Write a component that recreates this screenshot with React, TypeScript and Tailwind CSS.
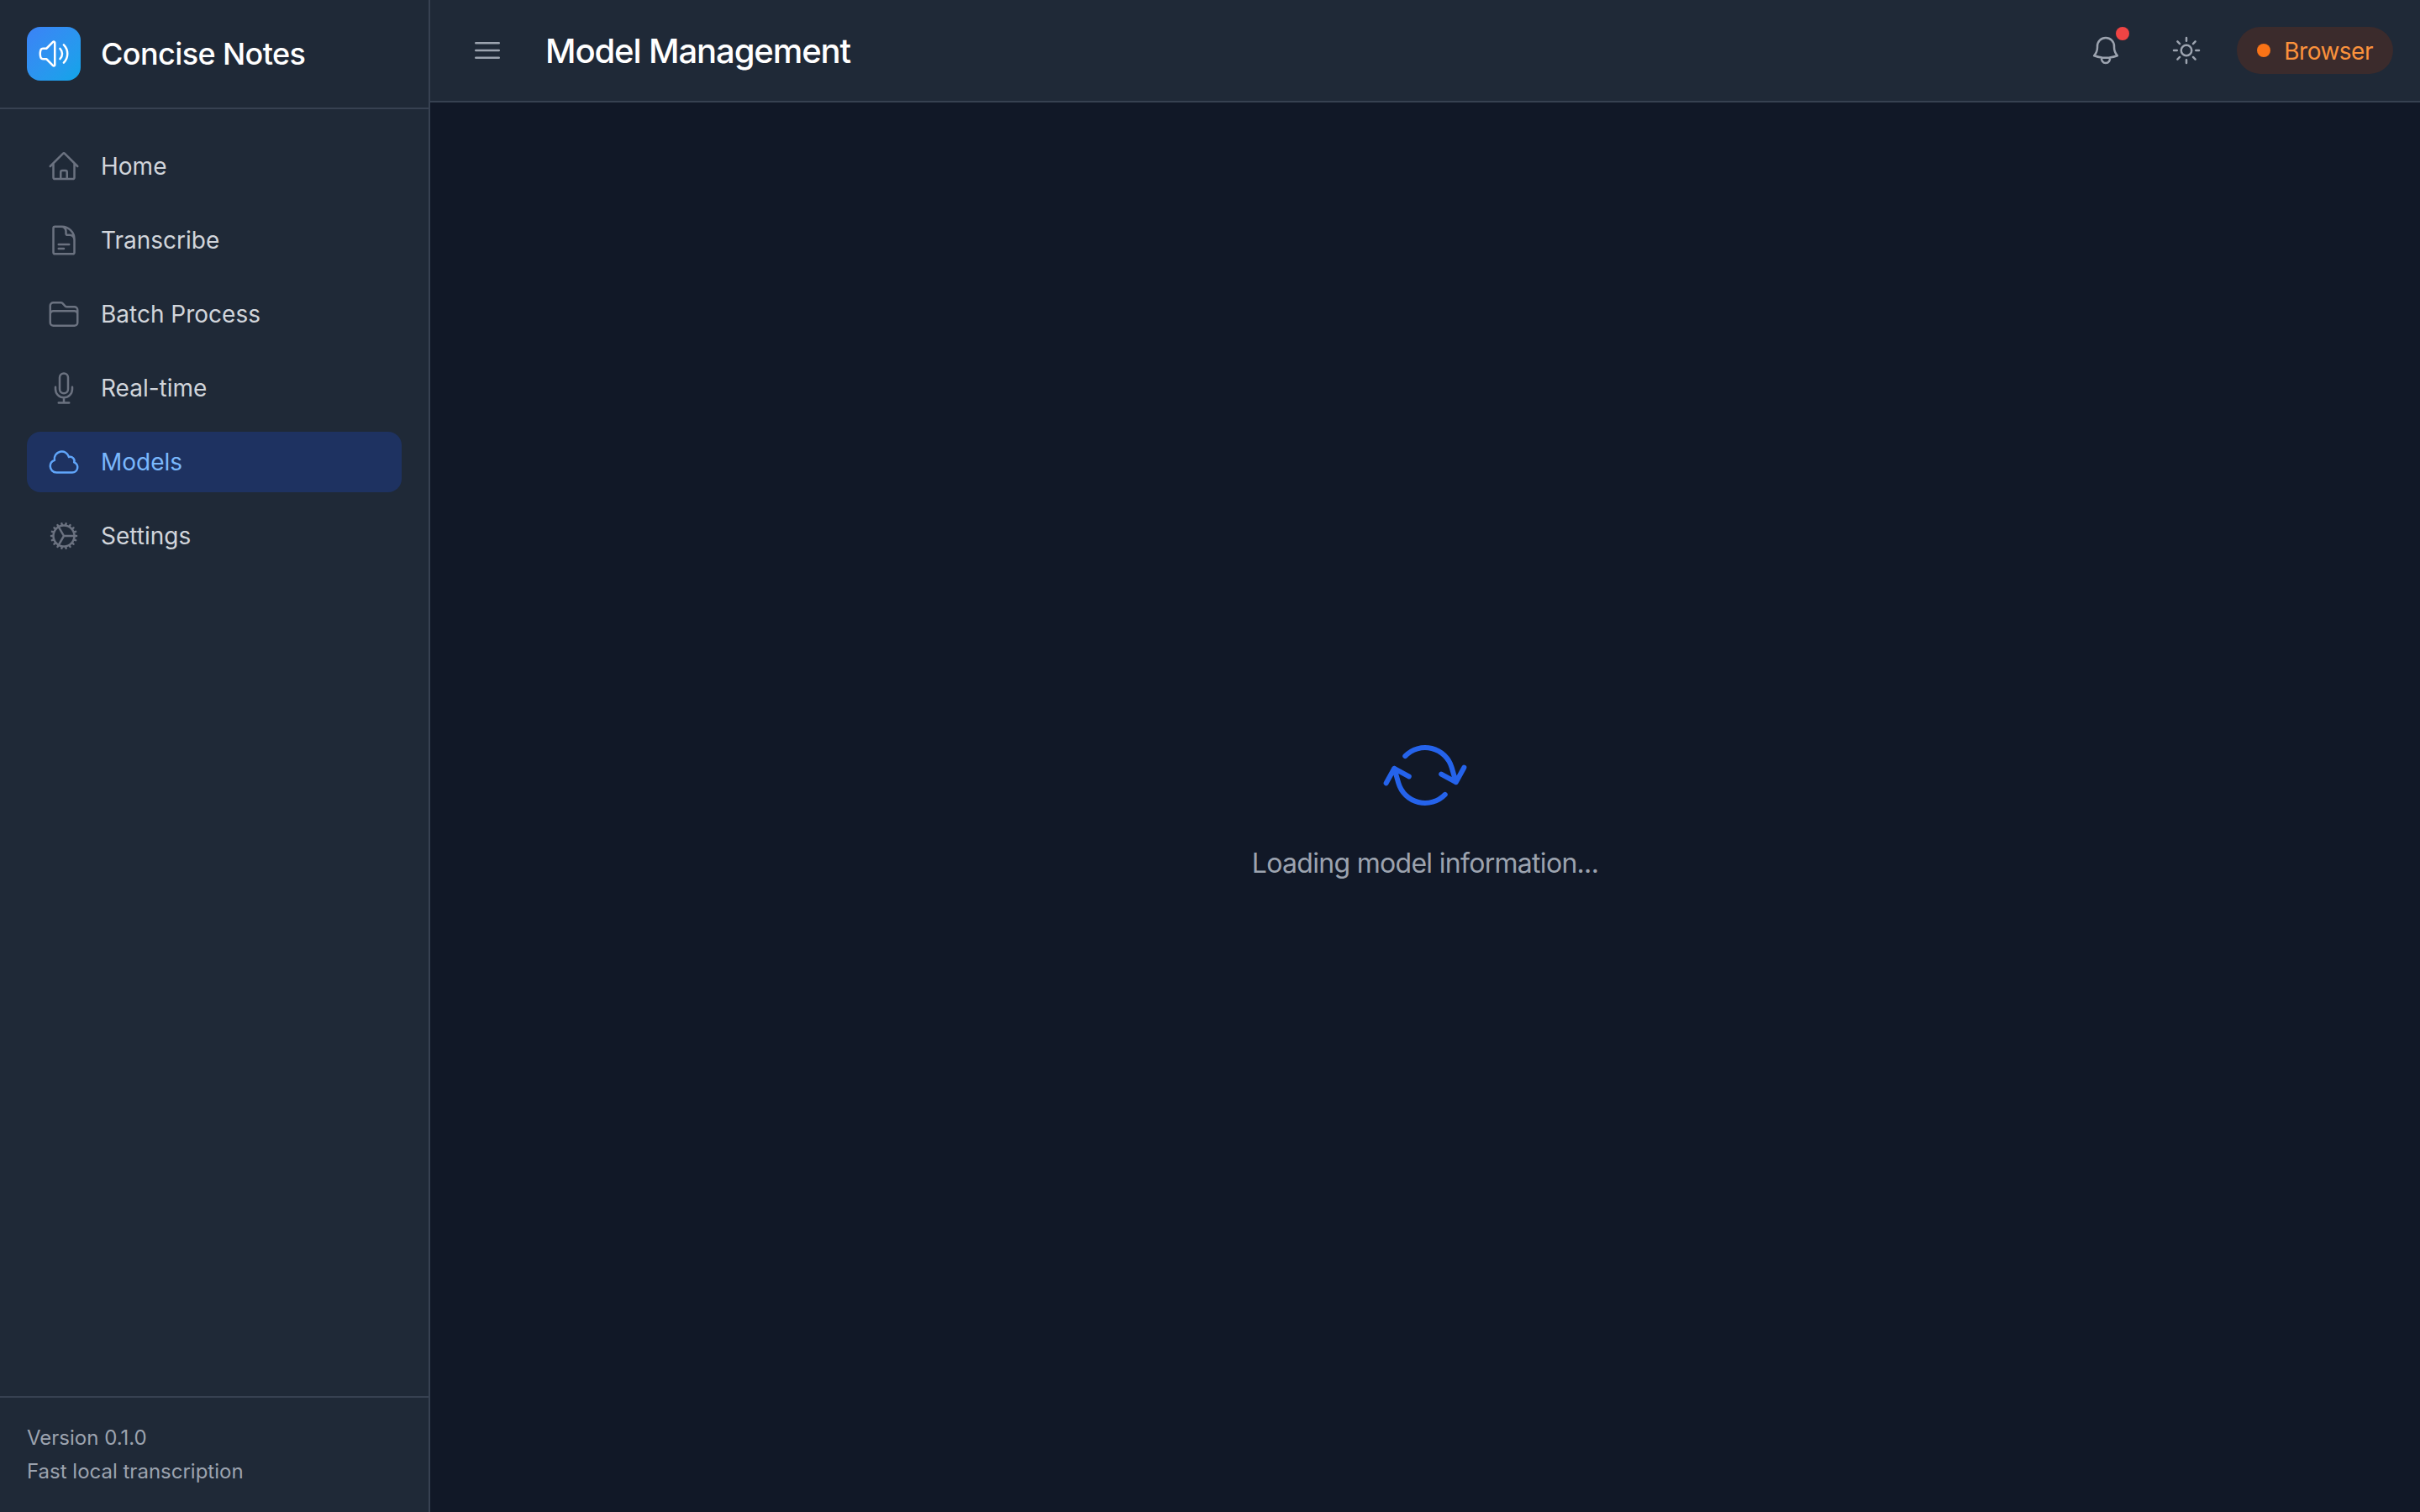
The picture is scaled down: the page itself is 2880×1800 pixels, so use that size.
import React from "react";
import {
  HiOutlineHome,
  HiOutlineDocumentText,
  HiOutlineFolder,
  HiOutlineMicrophone,
  HiOutlineCloud,
  HiOutlineCog,
  HiOutlineSpeakerWave,
  HiOutlineBars3,
  HiOutlineBell,
  HiOutlineSun,
  HiOutlineArrowPath,
} from "react-icons/hi2";

const items = [
  { label: "Home", Icon: HiOutlineHome },
  { label: "Transcribe", Icon: HiOutlineDocumentText },
  { label: "Batch Process", Icon: HiOutlineFolder },
  { label: "Real-time", Icon: HiOutlineMicrophone },
  { label: "Models", Icon: HiOutlineCloud, active: true },
  { label: "Settings", Icon: HiOutlineCog },
];

export default function App() {
  return (
    <div className="flex h-[1800px] w-[2880px] overflow-hidden bg-[#111827] font-['Inter',sans-serif]">
      <aside className="flex w-[512px] shrink-0 flex-col border-r-2 border-[#374151] bg-[#1f2937]">
        <div className="flex h-[130px] shrink-0 items-center gap-[24px] border-b-2 border-[#374151] px-[32px]">
          <div className="flex h-[64px] w-[64px] items-center justify-center rounded-[16px] bg-gradient-to-br from-[#3b82f6] to-[#0ea5e9] text-white">
            <HiOutlineSpeakerWave className="h-[40px] w-[40px]" />
          </div>
          <span className="text-[36px] leading-[56px] font-[550] tracking-[-0.6px] text-white">Concise Notes</span>
        </div>
        <nav className="flex flex-1 flex-col gap-[16px] p-[32px]">
          {items.map(({ label, Icon, active }) => (
            <div
              key={label}
              className={
                active
                  ? "flex h-[72px] items-center gap-[24px] rounded-[16px] bg-[#1e3261] px-[24px] text-[#7ab8fd]"
                  : "flex h-[72px] items-center gap-[24px] rounded-[16px] px-[24px] text-[#d1d5db]"
              }
            >
              <Icon className={active ? "h-[40px] w-[40px] text-[#60a5fa]" : "h-[40px] w-[40px] text-[#6b7280]"} />
              <span className="text-[28px] leading-[40px] font-normal">{label}</span>
            </div>
          ))}
        </nav>
        <div className="shrink-0 border-t-2 border-[#374151] px-[32px] py-[28px] text-[24px] leading-[40px] text-[#9ca3af]">
          <p>Version 0.1.0</p>
          <p>Fast local transcription</p>
        </div>
      </aside>
      <div className="flex min-w-0 flex-1 flex-col">
        <header className="flex h-[122px] shrink-0 items-center justify-between border-b-2 border-[#374151] bg-[#1f2937] pr-[32px] pl-[36px]">
          <div className="flex items-center gap-[37px]">
            <button className="rounded-[16px] p-[12px] text-[#9ca3af]">
              <HiOutlineBars3 className="h-[40px] w-[40px]" />
            </button>
            <h1 className="mt-[1px] text-[40px] leading-[56px] font-[550] tracking-[-1.1px] text-white">Model Management</h1>
          </div>
          <div className="flex items-center gap-[24px]">
            <button className="relative rounded-[16px] p-[16px] text-[#9ca3af]">
              <HiOutlineBell className="h-[40px] w-[40px]" />
              <span className="absolute top-[8px] right-[8px] h-[16px] w-[16px] rounded-full bg-[#ef4444]"></span>
            </button>
            <button className="rounded-[16px] p-[16px] text-[#9ca3af]">
              <HiOutlineSun className="h-[40px] w-[40px]" />
            </button>
            <div className="flex h-[56px] items-center gap-[16px] rounded-full bg-[#3b2b2c] px-[24px]">
              <span className="h-[16px] w-[16px] rounded-full bg-[#f97316]"></span>
              <span className="mt-[1px] text-[28px] leading-[40px] font-normal tracking-[-0.5px] text-[#fb923c]">Browser</span>
            </div>
          </div>
        </header>
        <main className="flex flex-1 flex-col items-center justify-center pt-[4px]">
          <HiOutlineArrowPath className="h-[96px] w-[96px] rotate-[29deg] text-[#2563eb]" />
          <p className="mt-[33px] text-[32px] leading-[48px] tracking-[-0.7px] text-[#9ca3af]">Loading model information...</p>
        </main>
      </div>
    </div>
  );
}
